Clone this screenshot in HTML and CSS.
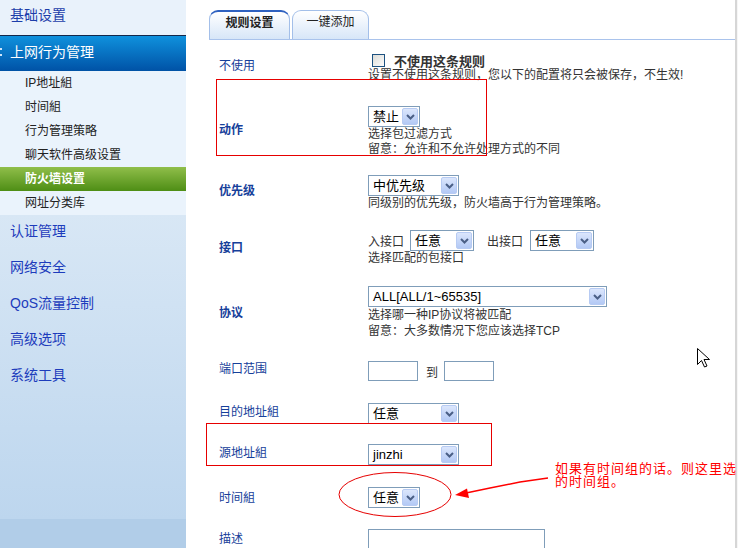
FILE: index.html
```html
<!DOCTYPE html>
<html lang="zh-CN">
<head>
    <meta charset="UTF-8">
    <title>防火墙设置</title>
    <link rel="stylesheet" href="styles.css">
</head>
<body>
    <div class="page">
        <!-- Left menu -->
        <aside class="sidebar">
            <div class="menu-top">基础设置</div>
            <div class="menu-head">上网行为管理</div>
            <ul class="submenu">
                <li>IP地址組</li>
                <li>时间組</li>
                <li>行为管理策略</li>
                <li>聊天软件高级设置</li>
                <li class="active">防火墙设置</li>
                <li>网址分类库</li>
            </ul>
            <ul class="menu-rest">
                <li>认证管理</li>
                <li>网络安全</li>
                <li>QoS流量控制</li>
                <li>高级选项</li>
                <li>系统工具</li>
            </ul>
        </aside>

        <!-- Rule editor -->
        <main class="content">
            <div class="tabs">
                <div class="tab tab-on">规则设置</div>
                <div class="tab tab-add">一键添加</div>
            </div>

            <div class="rule-form">
                <div class="lbl">不使用</div>
                <div class="val">
                    <div class="check-line"><span class="cbox"></span><b>不使用这条规则</b></div>
                    <div class="desc">设置不使用这条规则，您以下的配置将只会被保存，不生效!</div>
                </div>

                <div class="lbl lbl-b">动作</div>
                <div class="val">
                    <div class="sel sel-s"><span class="sel-txt">禁止</span><span class="sel-btn"><svg width="9" height="6" viewBox="0 0 9 6"><path d="M1 1L4.5 4.5L8 1" fill="none" stroke="#4a5f86" stroke-width="2"/></svg></span></div>
                    <div class="desc">选择包过滤方式<br>留意：允许和不允许处理方式的不同</div>
                </div>

                <div class="lbl lbl-b">优先级</div>
                <div class="val">
                    <div class="sel sel-m"><span class="sel-txt">中优先级</span><span class="sel-btn"><svg width="9" height="6" viewBox="0 0 9 6"><path d="M1 1L4.5 4.5L8 1" fill="none" stroke="#4a5f86" stroke-width="2"/></svg></span></div>
                    <div class="desc">同级别的优先级，防火墙高于行为管理策略。</div>
                </div>

                <div class="lbl lbl-b lbl-low">接口</div>
                <div class="val">
                    <div class="if-line">
                        <span>入接口</span>
                        <div class="sel sel-if sel-in"><span class="sel-txt">任意</span><span class="sel-btn"><svg width="9" height="6" viewBox="0 0 9 6"><path d="M1 1L4.5 4.5L8 1" fill="none" stroke="#4a5f86" stroke-width="2"/></svg></span></div>
                        <span class="out-lbl">出接口</span>
                        <div class="sel sel-if sel-out"><span class="sel-txt">任意</span><span class="sel-btn"><svg width="9" height="6" viewBox="0 0 9 6"><path d="M1 1L4.5 4.5L8 1" fill="none" stroke="#4a5f86" stroke-width="2"/></svg></span></div>
                    </div>
                    <div class="desc">选择匹配的包接口</div>
                </div>

                <div class="lbl lbl-b lbl-low">协议</div>
                <div class="val">
                    <div class="sel sel-l"><span class="sel-txt">ALL[ALL/1~65535]</span><span class="sel-btn"><svg width="9" height="6" viewBox="0 0 9 6"><path d="M1 1L4.5 4.5L8 1" fill="none" stroke="#4a5f86" stroke-width="2"/></svg></span></div>
                    <div class="desc desc-loose">选择哪一种IP协议将被匹配<br>留意：大多数情况下您应该选择TCP</div>
                </div>

                <div class="lbl">端口范围</div>
                <div class="val">
                    <div class="port-line"><span class="box"></span><span class="to">到</span><span class="box"></span></div>
                </div>

                <div class="lbl">目的地址組</div>
                <div class="val">
                    <div class="sel sel-m"><span class="sel-txt">任意</span><span class="sel-btn"><svg width="9" height="6" viewBox="0 0 9 6"><path d="M1 1L4.5 4.5L8 1" fill="none" stroke="#4a5f86" stroke-width="2"/></svg></span></div>
                </div>

                <div class="lbl">源地址組</div>
                <div class="val">
                    <div class="sel sel-m"><span class="sel-txt">jinzhi</span><span class="sel-btn"><svg width="9" height="6" viewBox="0 0 9 6"><path d="M1 1L4.5 4.5L8 1" fill="none" stroke="#4a5f86" stroke-width="2"/></svg></span></div>
                </div>

                <div class="lbl lbl-low">时间組</div>
                <div class="val">
                    <div class="sel sel-s"><span class="sel-txt">任意</span><span class="sel-btn"><svg width="9" height="6" viewBox="0 0 9 6"><path d="M1 1L4.5 4.5L8 1" fill="none" stroke="#4a5f86" stroke-width="2"/></svg></span></div>
                </div>

                <div class="lbl lbl-low">描述</div>
                <div class="val">
                    <span class="box box-wide"></span>
                </div>
            </div>
        </main>
    </div>

    <!-- red annotations drawn over the screenshot -->
    <svg class="marks" width="738" height="548" viewBox="0 0 738 548">
        <g fill="none" stroke="#e60000" stroke-width="1">
            <rect x="216.5" y="79.5" width="270" height="76"/>
            <rect x="206.5" y="423.5" width="285" height="42"/>
            <ellipse cx="395" cy="494.5" rx="56" ry="22"/>
        </g>
        <path d="M548 478L520 482L490 488L466 493" fill="none" stroke="#f00" stroke-width="1.5"/>
        <path d="M455 495L467 488.5L469 498Z" fill="#f00"/>
        <path d="M697.5 348.5V364.5L701.5 360.5L704.5 367L707 366L704 359.5H709.5Z" fill="#fff" stroke="#000" stroke-width="1"/>
    </svg>
    <div class="note">如果有时间组的话。则这里选<br>的时间组。</div>
</body>
</html>
```

FILE: styles.css
```css
* {
    box-sizing: border-box;
}

body {
    margin: 0;
    width: 738px;
    height: 548px;
    overflow: hidden;
    position: relative;
    font-family: "Liberation Sans", "Noto Sans CJK SC", sans-serif;
    font-size: 12px;
    color: #333;
    background: #f6f6f6;
}

.page {
    display: flex;
    width: 737px;
    height: 548px;
}

/* Sidebar */
.sidebar {
    width: 186px;
    flex: none;
    display: flex;
    flex-direction: column;
}

.menu-top {
    height: 35px;
    padding-left: 10px;
    line-height: 30px;
    font-size: 14px;
    color: #1c3eaa;
    background: #e9f2fb;
}

.menu-head {
    position: relative;
    height: 36px;
    padding-left: 10px;
    border-top: 1px solid #14284a;
    line-height: 33px;
    font-size: 14px;
    color: #fff;
    background: linear-gradient(#0f91dd, #0052a6);
}

.menu-head::before {
    content: "";
    position: absolute;
    left: 0;
    top: 12px;
    width: 2px;
    height: 2px;
    background: #cfe6fa;
    box-shadow: 0 6px 0 #cfe6fa;
}

.submenu,
.menu-rest {
    list-style: none;
    margin: 0;
    padding: 0;
}

.submenu {
    background: #eaf3fc;
}

.submenu li {
    height: 24px;
    line-height: 24px;
    padding-left: 25px;
    color: #222;
}

.submenu .active {
    color: #fff;
    font-weight: bold;
    background: linear-gradient(#90be4a, #4e8e15);
}

.menu-rest {
    flex: 1;
    background: linear-gradient(#d8e7f5 0, #bdd6ee 304px, #b1cde8 304px, #b1cde8 100%);
}

.menu-rest li {
    height: 36px;
    line-height: 32px;
    padding-left: 10px;
    font-size: 14px;
    color: #1d3cbc;
}

/* Main */
.content {
    flex: 1;
    padding: 10px 0 0 23px;
    background: #fff;
    border-right: 2px solid #d6d6d6;
}

.tabs {
    display: flex;
    gap: 2px;
    height: 30px;
    border-bottom: 1px solid #a9c3ec;
}

.tab {
    width: 81px;
    height: 29px;
    border: 1px solid #a3bfe9;
    border-bottom: none;
    border-radius: 9px 9px 0 0;
    background: linear-gradient(#fff, #d7e6f8);
    text-align: center;
    line-height: 23px;
    color: #222;
}

.tab-on {
    border-top: 2px solid #2e61c0;
    font-weight: bold;
}

.tab-add {
    width: 77px;
}

.rule-form {
    display: grid;
    grid-template-columns: 149px 1fr;
    grid-template-rows: 48px 79px 44px 66px 63px 54px 31px 51px 35px 48px;
    align-items: center;
    margin: 4px 0 0 10px;
}

.lbl {
    padding-bottom: 4px;
    line-height: 16px;
    color: #16409a;
}

.lbl-b {
    font-weight: bold;
}

.lbl-low {
    padding-bottom: 0;
}

.desc {
    line-height: 15px;
    color: #333;
    white-space: nowrap;
}

.desc-loose {
    line-height: 16px;
}

.check-line {
    display: flex;
    align-items: center;
    height: 15px;
}

.check-line b {
    font-size: 13px;
    color: #333;
}

.cbox {
    width: 13px;
    height: 13px;
    margin: 0 9px 0 4px;
    border: 1px solid #1d5281;
    background: linear-gradient(135deg, #dcdcd7, #fdfdfd);
}

/* Drop-down boxes */
.sel {
    display: flex;
    align-items: center;
    height: 21px;
    border: 1px solid #7f9db9;
    background: #fff;
    font-size: 13px;
    color: #000;
}

.sel-txt {
    flex: 1;
    padding-left: 4px;
    line-height: 19px;
    white-space: nowrap;
    overflow: hidden;
}

.sel-btn {
    display: flex;
    align-items: center;
    justify-content: center;
    width: 16px;
    height: 17px;
    margin-right: 1px;
    border: 1px solid #b7cbf3;
    border-radius: 2px;
    background: linear-gradient(#dbe6fc, #b3c9f5);
}

.sel-s { width: 52px; }
.sel-m { width: 91px; }
.sel-if { width: 64px; }
.sel-l { width: 239px; }

.if-line {
    display: flex;
    align-items: center;
    height: 21px;
}

.sel-in { margin-left: 6px; }
.out-lbl { margin-left: 13px; }
.sel-out { margin-left: 7px; }

.port-line {
    display: flex;
    align-items: center;
}

.box {
    display: block;
    width: 50px;
    height: 20px;
    border: 1px solid #7f9db9;
    background: #fff;
}

.to {
    margin: 0 6px 0 8px;
}

.box-wide {
    width: 177px;
}

/* Annotations */
.marks {
    position: absolute;
    top: 0;
    left: 0;
    pointer-events: none;
}

.note {
    position: absolute;
    left: 555px;
    top: 462px;
    font-size: 13px;
    letter-spacing: 1px;
    line-height: 13px;
    color: #f00;
    white-space: nowrap;
}
```
